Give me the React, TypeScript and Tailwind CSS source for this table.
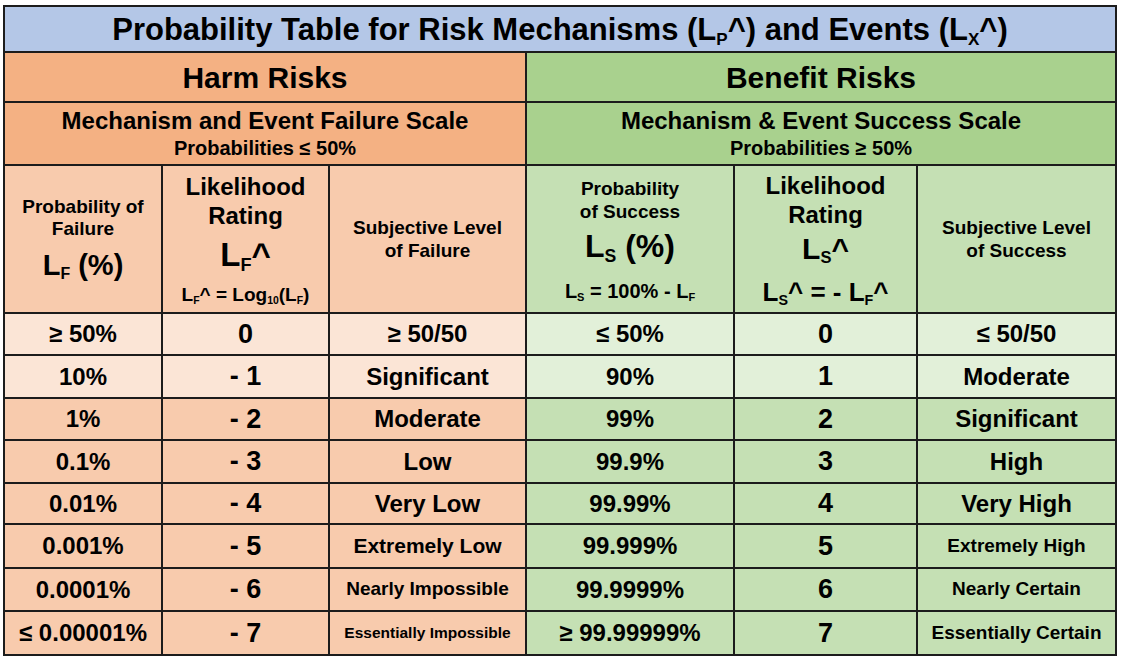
import React from "react";

const Sub = ({ children }: { children: React.ReactNode }) => (
  <sub className="text-[0.55em] -bottom-[0.3em]">{children}</sub>
);

type Row = { v: string; r: string; l: string; lc: string };

const left: Row[] = [
  { v: "≥ 50%", r: "0", l: "≥ 50/50", lc: "text-[24px]" },
  { v: "10%", r: "- 1", l: "Significant", lc: "text-[24px]" },
  { v: "1%", r: "- 2", l: "Moderate", lc: "text-[24px]" },
  { v: "0.1%", r: "- 3", l: "Low", lc: "text-[24px]" },
  { v: "0.01%", r: "- 4", l: "Very Low", lc: "text-[24px]" },
  { v: "0.001%", r: "- 5", l: "Extremely Low", lc: "text-[21px]" },
  { v: "0.0001%", r: "- 6", l: "Nearly Impossible", lc: "text-[19px]" },
  { v: "≤ 0.00001%", r: "- 7", l: "Essentially Impossible", lc: "text-[15.5px]" },
];

const right: Row[] = [
  { v: "≤ 50%", r: "0", l: "≤ 50/50", lc: "text-[24px]" },
  { v: "90%", r: "1", l: "Moderate", lc: "text-[24px]" },
  { v: "99%", r: "2", l: "Significant", lc: "text-[24px]" },
  { v: "99.9%", r: "3", l: "High", lc: "text-[24px]" },
  { v: "99.99%", r: "4", l: "Very High", lc: "text-[24px]" },
  { v: "99.999%", r: "5", l: "Extremely High", lc: "text-[19px]" },
  { v: "99.9999%", r: "6", l: "Nearly Certain", lc: "text-[19px]" },
  { v: "≥ 99.99999%", r: "7", l: "Essentially Certain", lc: "text-[19px]" },
];

const cell = "flex items-center justify-center text-center";

export default function App() {
  return (
    <div
      className="w-[1122px] h-[662px] bg-white pt-[5px] pl-[3px] text-black font-bold"
      style={{ fontFamily: '"Liberation Sans", Arial, sans-serif' }}
    >
      <div className="inline-grid bg-[#1c1c1c] p-[2px] gap-[2px] grid-cols-[156px_165px_195px_206px_181px_197px] grid-rows-[44px_48px_61px_146px_40px_41px_40px_41px_39px_42px_41px_42px]">
        {/* Title */}
        <div className={`${cell} col-span-6 bg-[#b4c7e7] text-[31px] leading-none`}>
          <span>
            Probability Table for Risk Mechanisms (L<Sub>P</Sub>^) and Events (L<Sub>X</Sub>^)
          </span>
        </div>

        {/* Harm / Benefit */}
        <div className={`${cell} col-span-3 bg-[#f4b183] text-[30px]`}>Harm Risks</div>
        <div className={`${cell} col-span-3 bg-[#a9d18e] text-[30px]`}>Benefit Risks</div>

        {/* Scale rows */}
        <div className={`${cell} col-span-3 bg-[#f4b183] flex-col`}>
          <div className="text-[24px] leading-[27px]">Mechanism and Event Failure Scale</div>
          <div className="text-[20px] leading-[24px] mt-[2px]">Probabilities ≤ 50%</div>
        </div>
        <div className={`${cell} col-span-3 bg-[#a9d18e] flex-col`}>
          <div className="text-[24px] leading-[27px]">Mechanism &amp; Event Success Scale</div>
          <div className="text-[20px] leading-[24px] mt-[2px]">Probabilities ≥ 50%</div>
        </div>

        {/* Column headers - left */}
        <div className={`${cell} flex-col bg-[#f8cbad]`}>
          <div className="text-[19px] leading-[22px]">Probability of</div>
          <div className="text-[19px] leading-[22px]">Failure</div>
          <div className="text-[29px] leading-[36px] mt-[7px]">
            L<Sub>F</Sub> (%)
          </div>
        </div>
        <div className={`${cell} flex-col bg-[#f8cbad]`}>
          <div className="text-[24px] leading-[29px]">Likelihood</div>
          <div className="text-[24px] leading-[29px]">Rating</div>
          <div className="text-[33px] leading-[38px] mt-[6px]">
            L<Sub>F</Sub>^
          </div>
          <div className="text-[19px] leading-[22px] mt-[10px]">
            L<Sub>F</Sub>^ = Log<Sub>10</Sub>(L<Sub>F</Sub>)
          </div>
        </div>
        <div className={`${cell} flex-col bg-[#f8cbad]`}>
          <div className="text-[19px] leading-[23px]">Subjective Level</div>
          <div className="text-[19px] leading-[23px]">of Failure</div>
        </div>

        {/* Column headers - right */}
        <div className={`${cell} flex-col bg-[#c5e0b4]`}>
          <div className="text-[19px] leading-[23px]">Probability</div>
          <div className="text-[19px] leading-[23px]">of Success</div>
          <div className="text-[32px] leading-[38px] mt-[4px]">
            L<Sub>S</Sub> (%)
          </div>
          <div className="text-[20px] leading-[22px] mt-[15px]">
            L<Sub>S</Sub> = 100% - L<Sub>F</Sub>
          </div>
        </div>
        <div className={`${cell} flex-col bg-[#c5e0b4]`}>
          <div className="text-[24px] leading-[29px]">Likelihood</div>
          <div className="text-[24px] leading-[29px]">Rating</div>
          <div className="text-[30px] leading-[36px] mt-[2px]">
            L<Sub>S</Sub>^
          </div>
          <div className="text-[26px] leading-[32px] mt-[9px]">
            L<Sub>S</Sub>^ = - L<Sub>F</Sub>^
          </div>
        </div>
        <div className={`${cell} flex-col bg-[#c5e0b4]`}>
          <div className="text-[19px] leading-[23px]">Subjective Level</div>
          <div className="text-[19px] leading-[23px]">of Success</div>
        </div>

        {/* Data rows */}
        {left.map((lr, i) => {
          const rr = right[i];
          const lbg = i < 2 ? "bg-[#fbe5d6]" : "bg-[#f8cbad]";
          const rbg = i < 2 ? "bg-[#e2f0d9]" : "bg-[#c5e0b4]";
          return (
            <React.Fragment key={i}>
              <div className={`${cell} ${lbg} text-[24px]`}>{lr.v}</div>
              <div className={`${cell} ${lbg} text-[27px]`}>{lr.r}</div>
              <div className={`${cell} ${lbg} ${lr.lc}`}>{lr.l}</div>
              <div className={`${cell} ${rbg} text-[24px]`}>{rr.v}</div>
              <div className={`${cell} ${rbg} text-[27px]`}>{rr.r}</div>
              <div className={`${cell} ${rbg} ${rr.lc}`}>{rr.l}</div>
            </React.Fragment>
          );
        })}
      </div>
    </div>
  );
}
